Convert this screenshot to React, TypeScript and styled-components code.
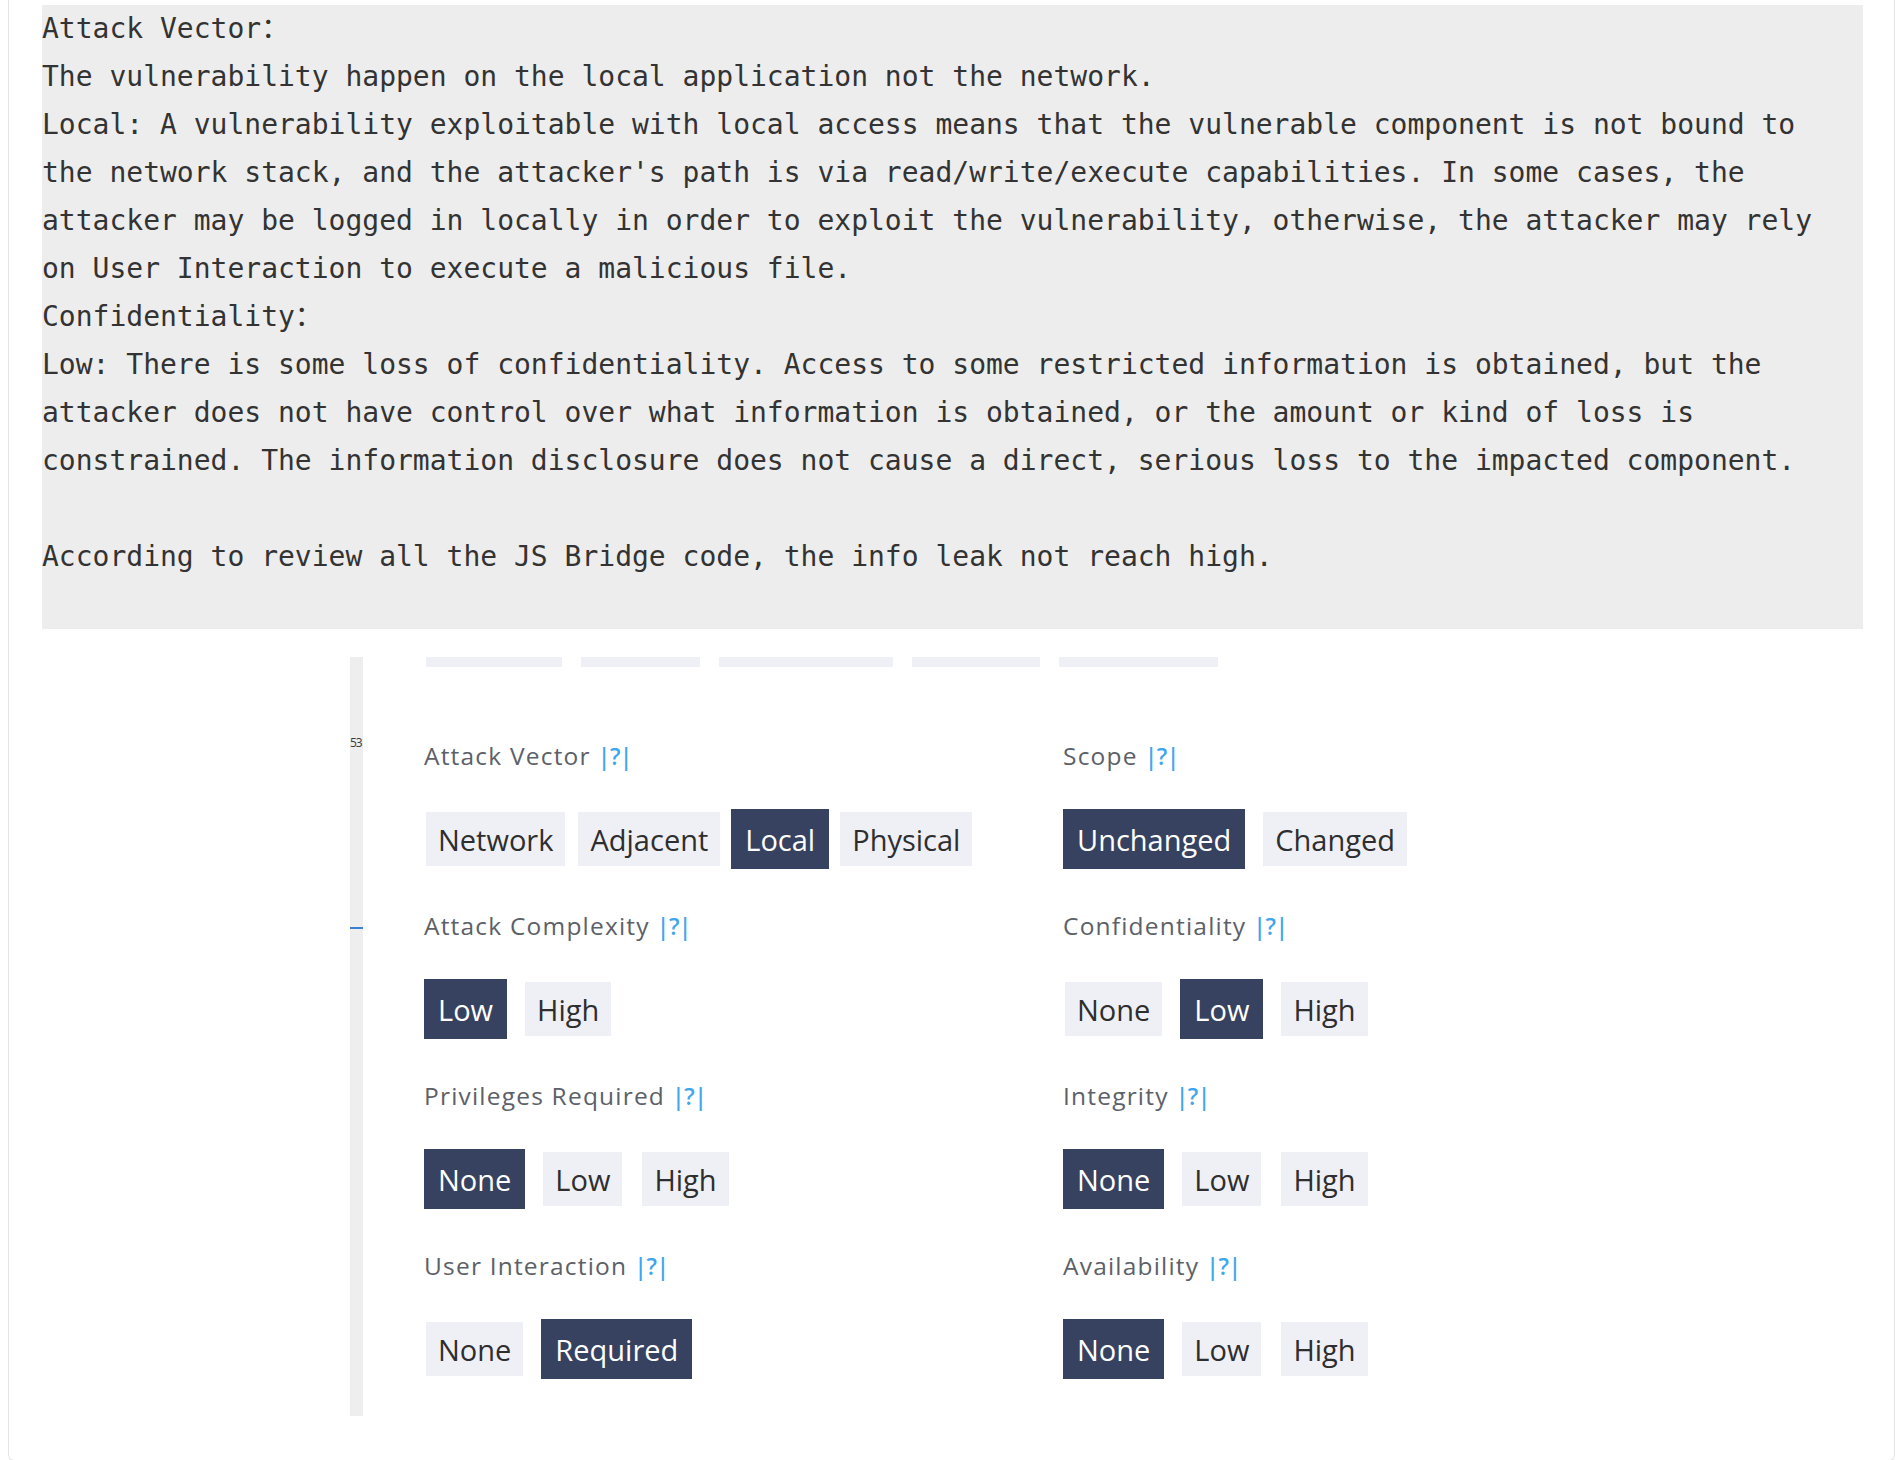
import React from "react";
import styled, { createGlobalStyle } from "styled-components";

const GlobalStyle = createGlobalStyle`
  html, body { margin: 0; padding: 0; background: #ffffff; }
  body { font-family: "DejaVu Sans", sans-serif; }
`;

const Page = styled.div`
  padding: 0 3px 0 8px;
`;

const Card = styled.div`
  border: 1px solid #e4e4e4;
  border-top: none;
  border-radius: 0 0 6px 6px;
  padding: 5px 31px 42px 33px;
  min-height: 1413px;
`;

const Pre = styled.pre`
  margin: 0;
  padding: 0 0 48px 0;
  background: #ededed;
  color: #333333;
  font-family: "DejaVu Sans Mono", "Noto Sans CJK SC", monospace;
  font-size: 28px;
  line-height: 48px;
  white-space: pre;
  overflow: hidden;
`;

const Shot = styled.div`
  display: flex;
  margin: 28px 0 0 308px;
  height: 759px;
`;

const Strip = styled.div`
  width: 13px;
  flex: 0 0 13px;
  background: #eeeeef;
  overflow: hidden;
  display: flex;
  flex-direction: column;
`;

const StripNum = styled.span`
  margin-top: 78px;
  font-family: "Open Sans", sans-serif;
  font-size: 12px;
  line-height: 16px;
  letter-spacing: -1px;
  color: #3a3a3a;
  white-space: nowrap;
`;

const StripMark = styled.span`
  margin-top: 176px;
  height: 2px;
  background: #3d7fd6;
`;

const Content = styled.div`
  flex: 1;
  padding-left: 61px;
`;

const TabBar = styled.div`
  display: flex;
  gap: 19px;
  padding-left: 2px;
`;

const TabStub = styled.div<{ $w: number }>`
  width: ${(p) => p.$w}px;
  height: 10px;
  background: #eef0f5;
`;

const Grid = styled.div`
  display: grid;
  grid-template-columns: 639px auto;
  row-gap: 42px;
  margin-top: 74px;
`;

const Group = styled.div`
  display: flex;
  flex-direction: column;
`;

const Label = styled.div`
  font-family: "Open Sans", sans-serif;
  font-size: 24.5px;
  font-weight: 500;
  line-height: 30px;
  letter-spacing: 1.2px;
  color: #5c6168;
`;

const Help = styled.span`
  margin-left: 7px;
  font-size: 23px;
  letter-spacing: -0.5px;
  font-weight: 600;
  color: #3ea6ee;
`;

const Buttons = styled.div<{ $gap: number }>`
  display: flex;
  align-items: center;
  gap: ${(p) => p.$gap}px;
  margin-top: 38px;
  height: 60px;
`;

const Choice = styled.div<{ $on?: boolean }>`
  display: inline-flex;
  align-items: center;
  box-sizing: border-box;
  height: ${(p) => (p.$on ? 60 : 58)}px;
  padding: 0 12px;
  border: 2px solid ${(p) => (p.$on ? "#36425f" : "transparent")};
  background: ${(p) => (p.$on ? "#36425f" : "#eef0f6")};
  background-clip: padding-box;
  color: ${(p) => (p.$on ? "#ffffff" : "#2e2e2e")};
  font-family: "Open Sans", sans-serif;
  font-size: 29px;
  font-weight: 500;
  white-space: nowrap;
`;

const lines = [
  "Attack Vector：",
  "The vulnerability happen on the local application not the network.",
  "Local: A vulnerability exploitable with local access means that the vulnerable component is not bound to",
  "the network stack, and the attacker's path is via read/write/execute capabilities. In some cases, the",
  "attacker may be logged in locally in order to exploit the vulnerability, otherwise, the attacker may rely",
  "on User Interaction to execute a malicious file.",
  "Confidentiality：",
  "Low: There is some loss of confidentiality. Access to some restricted information is obtained, but the",
  "attacker does not have control over what information is obtained, or the amount or kind of loss is",
  "constrained. The information disclosure does not cause a direct, serious loss to the impacted component.",
  "",
  "According to review all the JS Bridge code, the info leak not reach high.",
];

const tabs = [136, 119, 174, 128, 159];

type Metric = { name: string; options: string[]; selected: string; gap: number };

const metrics: Metric[] = [
  { name: "Attack Vector", options: ["Network", "Adjacent", "Local", "Physical"], selected: "Local", gap: 9 },
  { name: "Scope", options: ["Unchanged", "Changed"], selected: "Unchanged", gap: 16 },
  { name: "Attack Complexity", options: ["Low", "High"], selected: "Low", gap: 16 },
  { name: "Confidentiality", options: ["None", "Low", "High"], selected: "Low", gap: 16 },
  { name: "Privileges Required", options: ["None", "Low", "High"], selected: "None", gap: 16 },
  { name: "Integrity", options: ["None", "Low", "High"], selected: "None", gap: 16 },
  { name: "User Interaction", options: ["None", "Required"], selected: "Required", gap: 16 },
  { name: "Availability", options: ["None", "Low", "High"], selected: "None", gap: 16 },
];

export default function App() {
  return (
    <>
      <GlobalStyle />
      <Page>
        <Card>
          <Pre>{lines.join("\n")}</Pre>
          <Shot>
            <Strip>
              <StripNum>53</StripNum>
              <StripMark />
            </Strip>
            <Content>
              <TabBar>
                {tabs.map((w, i) => (
                  <TabStub key={i} $w={w} />
                ))}
              </TabBar>
              <Grid>
                {metrics.map((m) => (
                  <Group key={m.name}>
                    <Label>
                      {m.name}
                      <Help>|?|</Help>
                    </Label>
                    <Buttons $gap={m.gap}>
                      {m.options.map((o) => (
                        <Choice key={o} $on={o === m.selected}>
                          {o}
                        </Choice>
                      ))}
                    </Buttons>
                  </Group>
                ))}
              </Grid>
            </Content>
          </Shot>
        </Card>
      </Page>
    </>
  );
}
